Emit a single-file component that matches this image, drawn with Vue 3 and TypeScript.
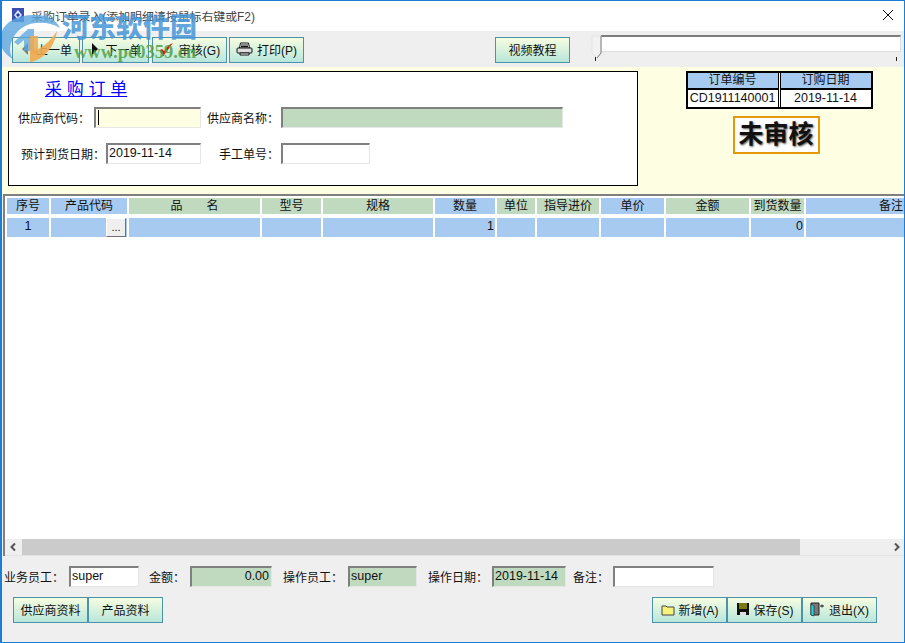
<script setup lang="ts">
interface Col { label: string; width: number; kind: 'blue' | 'green'; value?: string; align?: string; headAlign?: string }
const cols: Col[] = [
  { label: '序号', width: 42, kind: 'blue', value: '1', align: 'center' },
  { label: '产品代码', width: 76, kind: 'blue' },
  { label: '品　　名', width: 131, kind: 'green' },
  { label: '型号', width: 59, kind: 'green' },
  { label: '规格', width: 110, kind: 'green' },
  { label: '数量', width: 60, kind: 'blue', value: '1', align: 'right' },
  { label: '单位', width: 38, kind: 'green' },
  { label: '指导进价', width: 62, kind: 'green' },
  { label: '单价', width: 63, kind: 'blue' },
  { label: '金额', width: 83, kind: 'green' },
  { label: '到货数量', width: 53, kind: 'green', value: '0', align: 'right' },
  { label: '备注', width: 110, kind: 'blue', headAlign: 'head-note' },
]
</script>

<template>
  <div class="win">
    <header class="title">
      <svg class="app-icon" width="16" height="16" viewBox="0 0 16 16">
        <rect x="2" y="1" width="12" height="14" fill="#3a4fb0" />
        <path d="M8 3l4 5-4 5-4-5z" fill="#d8e4ff" />
        <path d="M8 6l2 2-2 2-2-2z" fill="#2030a0" />
      </svg>
      <span class="title-text">采购订单录入(添加明细请按鼠标右键或F2)</span>
      <svg class="close" width="12" height="12" viewBox="0 0 12 12">
        <path d="M1 1l10 10M11 1L1 11" stroke="#111" stroke-width="1" fill="none" />
      </svg>
    </header>

    <div class="toolbar">
      <button class="btn w68">
        <svg width="12" height="14" viewBox="0 0 12 14"><path d="M8 1v12L2 7z" fill="#8a7a60" /></svg>
        <span>上一单</span>
      </button>
      <button class="btn w67">
        <svg width="12" height="14" viewBox="0 0 12 14"><path d="M3 1v12l6-6z" fill="#111" /></svg>
        <span>下一单</span>
      </button>
      <button class="btn w75 third">
        <svg width="16" height="15" viewBox="0 0 16 15"><path d="M1 8l4 5 9-12-4 2-5 6-2-2z" fill="#e01818" /><path d="M1 9l4 5" stroke="#444" fill="none" /></svg>
        <span>审核(G)</span>
      </button>
      <button class="btn w75">
        <svg width="17" height="14" viewBox="0 0 17 14">
          <path d="M4.5 1h8l1 5h-10z" fill="#fff" stroke="#111" />
          <rect x="1" y="6" width="15" height="5" rx="1" fill="#ddd" stroke="#111" />
          <path d="M4 11h9v2H4z" fill="#fff" stroke="#111" />
          <path d="M5 3h7M5 4.5h7" stroke="#111" />
        </svg>
        <span>打印(P)</span>
      </button>
      <button class="btn w75 video">视频教程</button>
      <div class="slider">
        <div class="slider-track">
          <svg class="thumb" width="11" height="24" viewBox="0 0 11 24">
            <path d="M1 1h9v17l-4 5-5-5z" fill="#f2f2f2" stroke="#e4e4e4" />
            <path d="M10 1v17l-4 5" fill="none" stroke="#808080" />
          </svg>
        </div>
        <div class="ticks"><i></i><i></i></div>
      </div>
    </div>

    <section class="head">
      <div class="panel">
        <a class="doc-title">采 购 订 单</a>
        <div class="row row-1">
          <label class="l1">供应商代码：</label>
          <div class="input yellow w107"><span class="caret"></span></div>
          <label class="l2">供应商名称：</label>
          <div class="input green w282"></div>
        </div>
        <div class="row row-2">
          <label class="l3">预计到货日期：</label>
          <div class="input w95">2019-11-14</div>
          <label class="l4">手工单号：</label>
          <div class="input w89"></div>
        </div>
      </div>
      <div class="status">
        <div class="info">
          <div class="info-h">订单编号</div>
          <div class="info-h">订购日期</div>
          <div class="info-c">CD1911140001</div>
          <div class="info-c">2019-11-14</div>
        </div>
        <div class="stamp">未审核</div>
      </div>
    </section>

    <section class="table">
      <div class="grid-row grid-head">
        <div v-for="c in cols" :key="c.label" class="cell" :class="[c.kind, c.headAlign]" :style="{ width: c.width + 'px' }">{{ c.label }}</div>
      </div>
      <div class="grid-row grid-body">
        <div v-for="(c, i) in cols" :key="c.label" class="cell blue data" :class="c.align" :style="{ width: c.width + 'px' }">
          {{ c.value }}
          <button v-if="i === 1" class="dots">...</button>
        </div>
      </div>
      <div class="spacer"></div>
      <div class="hscroll">
        <svg class="arrow" width="17" height="16" viewBox="0 0 17 16"><path d="M10 4.5L6.5 8l3.5 3.5" fill="none" stroke="#555" stroke-width="2" /></svg>
        <div class="hthumb"></div>
        <svg class="arrow right" width="14" height="16" viewBox="0 0 14 16"><path d="M5 4.5L8.5 8 5 11.5" fill="none" stroke="#555" stroke-width="2" /></svg>
      </div>
    </section>

    <section class="foot">
      <div class="foot-row">
        <label>业务员工：</label>
        <div class="input w70">super</div>
        <label class="g10">金额：</label>
        <div class="input green w82 r">0.00</div>
        <label class="g11">操作员工：</label>
        <div class="input green w69">super</div>
        <label class="g11 tight">操作日期：</label>
        <div class="input green w74">2019-11-14</div>
        <label class="g7 tight">备注：</label>
        <div class="input w101"></div>
      </div>
      <div class="foot-actions">
        <div class="group">
          <button class="btn w75">供应商资料</button>
          <button class="btn w75">产品资料</button>
        </div>
        <div class="group">
          <button class="btn w75">
            <svg width="14" height="13" viewBox="0 0 14 13"><path d="M1 3h4l1 1h7v8H1z" fill="#f6f27a" stroke="#444" /></svg>
            <span>新增(A)</span>
          </button>
          <button class="btn w75">
            <svg width="14" height="14" viewBox="0 0 14 14"><path d="M1 1h12v12H1z" fill="#111" /><path d="M3 1h8v6H3z" fill="#7a7a10" /><path d="M4 10h6v3H4z" fill="#ddd" /></svg>
            <span>保存(S)</span>
          </button>
          <button class="btn w75">
            <svg width="15" height="15" viewBox="0 0 15 15"><path d="M1 1h8v12H1z" fill="#777" stroke="#222" /><path d="M1 2l3 2v10l-3-1z" fill="#18d8e8" stroke="#222" stroke-width=".6" /><path d="M10 4h4M12 2.5v3" stroke="#222" /></svg>
            <span>退出(X)</span>
          </button>
        </div>
      </div>
    </section>

    <div class="watermark" aria-hidden="true">
      <svg class="wm-logo" width="64" height="64" viewBox="0 0 64 64">
        <path d="M0 38C2 22 18 14 36 15c12 0 20 5 24 13-10-6-20-6-30-4C18 28 10 38 10 50c0 4 2 8 4 10C4 54-1 46 0 38z" fill="#5aa6e0" opacity=".8" />
        <path d="M14 42l14-13h6v22H24V40l-6 5z" fill="#5aa6e0" opacity=".75" />
        <path d="M57 31c-2 14-12 29-27 31V52c10-2 20-10 27-21z" fill="#f0a850" opacity=".9" />
        <path d="M30 36h8v18h-8z" fill="#f0a850" opacity=".85" />
      </svg>
      <span class="wm-cn">河东软件园</span>
      <span class="wm-url">www.pc0359.cn</span>
    </div>
  </div>
</template>

<style>
html, body { margin: 0; padding: 0; }
</style>

<style scoped>
.win {
  position: relative;
  box-sizing: border-box;
  width: 905px;
  height: 643px;
  overflow: hidden;
  display: flex;
  flex-direction: column;
  border: 1px solid #1a7fd4;
  border-left-width: 2px;
  background: #efefef;
  color: #111;
  font: 12px "Liberation Sans", "Noto Sans CJK SC", sans-serif;
}
.title {
  height: 30px;
  flex: none;
  box-sizing: border-box;
  display: flex;
  align-items: center;
  background: #fff;
  padding: 0 10px 2px 8px;
}
.app-icon { margin-right: 5px; }
.title-text { color: #444; font-size: 11.9px; }
.close { margin-left: auto; }

.toolbar {
  height: 36px;
  flex: none;
  display: flex;
  align-items: flex-start;
  padding: 6px 0 0 10px;
  box-sizing: border-box;
  background: #efefef;
}
.btn {
  box-sizing: border-box;
  height: 26px;
  padding: 0 0 2px;
  display: flex;
  align-items: center;
  justify-content: center;
  gap: 4px;
  border: 1px solid #4a93a8;
  background: linear-gradient(#f6fde0, #b8e6dc);
  color: #111;
  font: 12px "Liberation Sans", "Noto Sans CJK SC", sans-serif;
  flex: none;
}
.toolbar .btn + .btn { margin-left: 2px; }
.toolbar .btn.third { margin-left: 3px; }
.w68 { width: 68px; }
.w67 { width: 67px; }
.w75 { width: 75px; }
.toolbar .btn.video { margin-left: 191px; }
.slider { margin-left: 22px; width: 310px; position: relative; margin-top: -2px; }
.slider-track {
  margin-left: 9px;
  width: 300px;
  height: 17px;
  box-sizing: border-box;
  background: #fff;
  border-top: 2px solid #7d7d7d;
  border-right: 1px solid #e0e0e0;
  border-bottom: 1px solid #e0e0e0;
  position: relative;
}
.thumb { position: absolute; left: -10px; top: -2px; }
.ticks { display: flex; justify-content: space-between; margin: 5px 0 0 3px; width: 302px; }
.ticks i { width: 1px; height: 4px; background: #222; display: block; }

.head {
  height: 127px;
  flex: none;
  display: flex;
  background: #fefee2;
  padding: 4px 0 0 6px;
  box-sizing: border-box;
}
.panel {
  width: 630px;
  height: 115px;
  box-sizing: border-box;
  background: #fff;
  border: 1px solid #000;
  flex: none;
}
.doc-title {
  display: block;
  margin: 7px 0 0 35px;
  width: 85px;
  box-sizing: border-box;
  padding-left: 1px;
  color: #0000ff;
  text-decoration: underline;
  font-size: 17px;
  line-height: 21px;
  white-space: nowrap;
}
.row { display: flex; align-items: center; }
.row-1 { margin-top: 7px; }
.row-2 { margin-top: 15px; }
.input {
  box-sizing: border-box;
  height: 21px;
  flex: none;
  border: 2px solid;
  border-color: #808080 #e6e6e6 #e6e6e6 #808080;
  border-right-width: 1px;
  border-bottom-width: 1px;
  background: #fff;
  font-size: 12.5px;
  line-height: 17px;
  padding-left: 1px;
  white-space: nowrap;
  color: #111;
}
.yellow { background: #fefee2; }
.green { background: #c0dac0; }
.r { text-align: right; padding-right: 2px; }
.caret { display: block; width: 1px; height: 15px; background: #000; margin: 1px 0 0 1px; }
.w107 { width: 107px; }
.w282 { width: 282px; }
.w95 { width: 95px; }
.w89 { width: 89px; }
.w70 { width: 70px; margin-left: 5px; }
.w82 { width: 82px; }
.w69 { width: 69px; }
.w74 { width: 74px; }
.w101 { width: 101px; }
label { white-space: nowrap; display: block; flex: none; }
.l1 { margin-left: 9px; width: 76px; }
.l2 { margin-left: 6px; width: 74px; }
.l3 { margin-left: 12px; width: 85px; }
.l4 { margin-left: 18px; width: 62px; }

.status { flex: 1; display: flex; flex-direction: column; align-items: center; }
.info {
  display: grid;
  grid-template-columns: 90px 90px;
  row-gap: 2px;
  column-gap: 3px;
  margin: 0 0 0 16px;
  width: 187px;
  box-sizing: border-box;
  border: 2px solid #000;
  background: linear-gradient(to right, #000 91px, #fff 91px, #fff 92px, #000 92px);
}
.info-h {
  height: 15px;
  line-height: 15px;
  background: #a6caf0;
  text-align: center;
  font-size: 12px;
}
.info-c {
  height: 17px;
  line-height: 17px;
  background: #fff;
  text-align: center;
  font-size: 12.5px;
  white-space: nowrap;
}
.stamp {
  margin: 7px 0 0 10px;
  width: 87px;
  height: 38px;
  box-sizing: border-box;
  border: 2px solid #e8960a;
  background: #fff;
  text-align: center;
  font-size: 25px;
  font-weight: 700;
  line-height: 33px;
  color: #111;
  text-shadow: 1px 1px 2px #555;
  white-space: nowrap;
}

.table {
  flex: 1;
  min-height: 0;
  display: flex;
  flex-direction: column;
  background: #fff;
  margin-left: 1px;
  border-top: 2px solid #808080;
  border-left: 2px solid #808080;
  padding-top: 2px;
}
.grid-row { display: flex; gap: 2px; padding-left: 2px; width: 1020px; flex: none; }
.grid-head { height: 16px; }
.grid-body { height: 19px; margin-top: 4px; }
.cell {
  box-sizing: border-box;
  flex: none;
  text-align: center;
  line-height: 16px;
  white-space: nowrap;
  position: relative;
}
.cell.blue { background: #a6caf0; }
.cell.green { background: #c0dac0; }
.cell.data { line-height: 17px; font-size: 12.5px; }
.cell.right { text-align: right; padding-right: 1px; }
.cell.center { text-align: center; }
.head-note { text-align: left; padding-left: 73px; }
.dots {
  position: absolute;
  right: 1px;
  top: 0;
  width: 20px;
  height: 19px;
  box-sizing: border-box;
  padding: 0;
  border: 1px solid;
  border-color: #fff #707070 #707070 #fff;
  background: #efefef;
  font: 11px/17px "Liberation Sans", sans-serif;
  color: #111;
}
.spacer { flex: 1; min-height: 0; }
.hscroll {
  height: 16px;
  flex: none;
  display: flex;
  align-items: center;
  background: #efefef;
  border-bottom: 1px solid #e4e4e4;
}
.arrow { flex: none; }
.arrow.right { margin-left: auto; }
.hthumb { width: 778px; height: 16px; background: #cbcbcb; flex: none; }

.foot { height: 86px; flex: none; background: #efefef; }
.foot-row { display: flex; align-items: center; padding: 10px 0 0 2px; height: 21px; }
.g10 { margin-left: 10px; margin-right: 5px; }
.g11 { margin-left: 11px; margin-right: 5px; }
.g7 { margin-left: 7px; margin-right: 5px; }
.g11.tight, .g7.tight { margin-right: 4px; }
.foot-actions {
  display: flex;
  justify-content: space-between;
  padding: 10px 27px 0 11px;
}
.group { display: flex; }
.watermark { position: absolute; left: -2px; top: -1px; width: 220px; height: 70px; pointer-events: none; }
.wm-logo { position: absolute; left: 0; top: 0; }
.wm-cn {
  position: absolute;
  left: 62px;
  top: 10px;
  font: 900 27px/32px "Noto Sans CJK SC", sans-serif;
  color: rgba(70, 150, 215, .85);
  white-space: nowrap;
}
.wm-url {
  position: absolute;
  left: 74px;
  top: 42px;
  font: 700 18.5px/20px "Liberation Serif", serif;
  color: rgba(80, 160, 70, .85);
  white-space: nowrap;
}
</style>
